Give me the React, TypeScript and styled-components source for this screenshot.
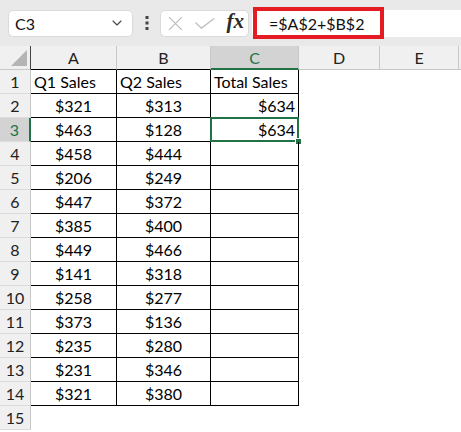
import React from 'react'
import styled, { createGlobalStyle } from 'styled-components'
import { ChevronDown } from 'lucide-react'

const GlobalStyle = createGlobalStyle`
  html, body {
    margin: 0;
    padding: 0;
    background: #ffffff;
  }
  body {
    font-family: Lato, "Noto Sans", sans-serif;
    color: #000;
  }
`

const GREEN = '#217346'
const HEAD_BG = '#f0f0f0'
const HEAD_LINE = '#c8c8c8'

const Toolbar = styled.div`
  display: flex;
  align-items: center;
  height: 46px;
  padding-left: 8px;
  box-sizing: border-box;
  background: #e9e9e9;
`

const NameBox = styled.div`
  display: flex;
  align-items: center;
  justify-content: space-between;
  width: 125px;
  height: 27px;
  box-sizing: border-box;
  padding: 0 7px 0 6px;
  background: #fff;
  border: 1px solid #dadada;
  border-radius: 5px;
  font-size: 16px;
  color: #111;
`

const Grip = styled.div`
  width: 27px;
  display: flex;
  justify-content: center;
`

const ActionBox = styled.div`
  display: flex;
  align-items: center;
  gap: 12px;
  width: 89px;
  height: 27px;
  box-sizing: border-box;
  padding: 0 4px 0 7px;
  background: #fff;
  border: 1px solid #dadada;
  border-radius: 5px;
`

const Fx = styled.span`
  margin-left: auto;
  font-family: "Liberation Serif", serif;
  font-style: italic;
  font-weight: bold;
  font-size: 21px;
  color: #2a2a2a;
  line-height: 1;
  margin-top: -3px;
`

const FormulaBar = styled.div`
  flex: 1;
  display: flex;
  align-items: center;
  height: 27px;
  margin-left: 3px;
  background: #fff;
  border-radius: 5px 0 0 5px;
`

const Highlight = styled.div`
  display: flex;
  align-items: center;
  width: 131px;
  height: 32px;
  margin-left: 1px;
  box-sizing: border-box;
  padding-left: 12px;
  border: 4px solid #e51b24;
  background: #fff;
  font-size: 16px;
  color: #111;
`

const Sheet = styled.div`
  display: grid;
  grid-template-columns: 31px 86px 94px 88px 81px 79px 1fr;
  grid-auto-rows: 24px;
`

const Corner = styled.div`
  position: relative;
  background: ${HEAD_BG};
  border-right: 1px solid #444;
  border-bottom: 1px solid ${HEAD_LINE};
  &::after {
    content: '';
    position: absolute;
    right: 3px;
    bottom: 3px;
    width: 16px;
    height: 16px;
    background: #b5b5b5;
    clip-path: polygon(100% 0, 100% 100%, 0 100%);
  }
`

const ColHead = styled.div<{ $selected?: boolean; $boxed?: boolean }>`
  display: flex;
  align-items: center;
  justify-content: center;
  box-sizing: border-box;
  font-size: 16px;
  color: ${(p) => (p.$selected ? GREEN : '#222')};
  background: ${(p) => (p.$selected ? '#d3d3d3' : HEAD_BG)};
  border-right: 1px solid ${HEAD_LINE};
  border-bottom: ${(p) =>
    p.$selected ? `2px solid ${GREEN}` : `1px solid ${p.$boxed ? '#000' : HEAD_LINE}`};
`

const RowHead = styled.div<{ $selected?: boolean }>`
  display: flex;
  align-items: center;
  justify-content: center;
  box-sizing: border-box;
  font-size: 16px;
  color: ${(p) => (p.$selected ? GREEN : '#222')};
  background: ${(p) => (p.$selected ? '#d3d3d3' : HEAD_BG)};
  border-right: ${(p) => (p.$selected ? `2px solid ${GREEN}` : `1px solid ${HEAD_LINE}`)};
  border-bottom: 1px solid #dcdcdc;
`

type Align = 'left' | 'center' | 'right'

const Cell = styled.div<{ $align?: Align; $boxed?: boolean; $active?: boolean }>`
  position: relative;
  display: flex;
  align-items: center;
  justify-content: ${(p) =>
    p.$align === 'right' ? 'flex-end' : p.$align === 'center' ? 'center' : 'flex-start'};
  box-sizing: border-box;
  padding: 0 3px;
  font-size: 16px;
  color: #000;
  white-space: nowrap;
  border-right: 1px solid ${(p) => (p.$boxed ? '#000' : 'transparent')};
  border-bottom: 1px solid ${(p) => (p.$boxed ? '#000' : 'transparent')};

  ${(p) =>
    p.$active &&
    `
    &::before {
      content: '';
      position: absolute;
      left: -1px;
      top: -1px;
      right: -1px;
      bottom: -1px;
      border: 2px solid ${GREEN};
      pointer-events: none;
    }
    &::after {
      content: '';
      position: absolute;
      right: -4px;
      bottom: -4px;
      width: 5px;
      height: 5px;
      background: ${GREEN};
      border: 1px solid #fff;
    }
  `}
`

const q1 = [321, 463, 458, 206, 447, 385, 449, 141, 258, 373, 235, 231, 321]
const q2 = [313, 128, 444, 249, 372, 400, 466, 318, 277, 136, 280, 346, 380]
const totals: Record<number, number> = { 2: 634, 3: 634 }
const cols = ['A', 'B', 'C', 'D', 'E', '']

const Dots = () => (
  <svg width="4" height="16" viewBox="0 0 4 16">
    <rect x="0.5" y="1" width="3" height="3" fill="#444" />
    <rect x="0.5" y="6.5" width="3" height="3" fill="#444" />
    <rect x="0.5" y="12" width="3" height="3" fill="#444" />
  </svg>
)

const CancelIcon = () => (
  <svg width="15" height="15" viewBox="0 0 15 15" fill="none" stroke="#bdbdbd" strokeWidth="1.3">
    <path d="M1 1 14 14M14 1 1 14" />
  </svg>
)

const EnterIcon = () => (
  <svg width="20" height="11" viewBox="0 0 20 11" fill="none" stroke="#bdbdbd" strokeWidth="1.3">
    <path d="M0.5 4.5 6.5 10.2 19.5 0.5" />
  </svg>
)

export default function App() {
  const rows = Array.from({ length: 15 }, (_, i) => i + 1)

  return (
    <>
      <GlobalStyle />
      <Toolbar>
        <NameBox>
          <span>C3</span>
          <ChevronDown size={16} strokeWidth={1.6} color="#444" />
        </NameBox>
        <Grip>
          <Dots />
        </Grip>
        <ActionBox>
          <CancelIcon />
          <EnterIcon />
          <Fx>fx</Fx>
        </ActionBox>
        <FormulaBar>
          <Highlight>=$A$2+$B$2</Highlight>
        </FormulaBar>
      </Toolbar>

      <Sheet>
        <Corner />
        {cols.map((c, i) => (
          <ColHead key={i} $selected={c === 'C'} $boxed={i < 3}>
            {c}
          </ColHead>
        ))}

        {rows.map((r) => {
          const boxed = r <= 14
          const a = r === 1 ? 'Q1 Sales' : r <= 14 ? `$${q1[r - 2]}` : ''
          const b = r === 1 ? 'Q2 Sales' : r <= 14 ? `$${q2[r - 2]}` : ''
          const c = r === 1 ? 'Total Sales' : totals[r] ? `$${totals[r]}` : ''
          return (
            <React.Fragment key={r}>
              <RowHead $selected={r === 3}>{r}</RowHead>
              <Cell $boxed={boxed} $align={r === 1 ? 'left' : 'center'}>
                {a}
              </Cell>
              <Cell $boxed={boxed} $align={r === 1 ? 'left' : 'center'}>
                {b}
              </Cell>
              <Cell $boxed={boxed} $align={r === 1 ? 'left' : 'right'} $active={r === 3}>
                {c}
              </Cell>
              <Cell />
              <Cell />
              <Cell />
            </React.Fragment>
          )
        })}
      </Sheet>
    </>
  )
}
